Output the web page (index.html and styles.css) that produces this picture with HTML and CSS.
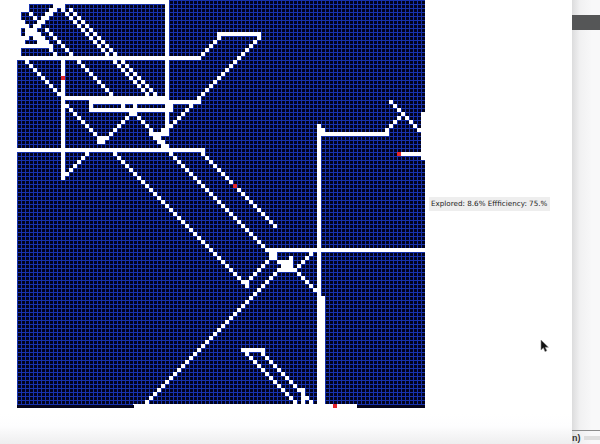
FILE: index.html
```html
<!DOCTYPE html>
<html lang="en">

<head>
    <meta charset="UTF-8">
    <title>Maze explorer</title>
    <link rel="stylesheet" href="styles.css">
</head>

<body>
    <div class="window">
        <main class="stage">
            <canvas id="maze" class="maze" width="408" height="408"></canvas>
            <p class="stats">Explored: 8.6% Effficiency: 75.%</p>
            <svg class="pointer" width="10" height="14" viewBox="0 0 10 14">
                <path d="M1 1v10l2.4-2.2L5 12.6l1.8-.8-1.6-3.6H8.4z" fill="#111" stroke="#888" stroke-width=".6"/>
            </svg>
        </main>
        <aside class="side">
            <div class="side-bar"></div>
            <div class="side-status"><b>n)</b><span class="side-faint"></span></div>
        </aside>
    </div>
    <script src="maze.js"></script>
</body>

</html>
```

FILE: styles.css
```css
html,
body {
    margin: 0;
    padding: 0;
    background: #fff;
}

.window {
    display: flex;
    width: 600px;
    height: 444px;
    overflow: hidden;
}

/* main area */
.stage {
    position: relative;
    width: 572px;
    padding-left: 17px;
    box-sizing: border-box;
    background: linear-gradient(to top, #eeeeef, #fdfdfe 18px, #fff 30px);
}

.maze {
    display: block;
}

.stats {
    position: absolute;
    top: 197px;
    left: 429px;
    width: 121px;
    margin: 0;
    padding-left: 2px;
    box-sizing: border-box;
    height: 14px;
    line-height: 14px;
    background: #eeeeee;
    color: #222;
    font-family: "DejaVu Sans", sans-serif;
    font-size: 7.2px;
    white-space: nowrap;
}

.pointer {
    position: absolute;
    top: 339px;
    left: 540px;
}

/* window behind */
.side {
    display: flex;
    flex-direction: column;
    flex: 1;
    background: linear-gradient(to right, #dcdcdd, #f1f1f2 8px, #f8f8f9 20px);
}

.side-bar {
    height: 15px;
    margin-top: 15px;
    background: #555657;
}

.side-status {
    margin-top: auto;
    height: 13px;
    border-top: 1px solid #8c8c8c;
    display: flex;
    align-items: center;
    gap: 3px;
    color: #333;
    font-family: "Liberation Sans", sans-serif;
    font-size: 9px;
}

.side-faint {
    flex: 1;
    height: 4px;
    background: #dedede;
}
```

FILE: maze.js
```js
const canvas = document.getElementById('maze');
const ctx = canvas.getContext('2d');

const PITCH = 4;
const COLS = 102;

// left column of the canvas sits at x=17 on the page
const colOf = (x) => Math.round((x - 17 - 2) / PITCH);
const rowOf = (y) => Math.round((y - 2) / PITCH);

// blocks of open cells, [c1, r1, c2, r2] inclusive
const blocks = [
    [0, 0, 37, 0], [0, 0, 0, 13], [1, 1, 2, 2],
    [9, 1, 11, 1], [8, 2, 9, 2], [7, 3, 8, 3], [6, 4, 7, 4], [5, 5, 6, 5], [4, 6, 5, 6],
    [3, 3, 3, 3], [4, 4, 4, 4], [1, 5, 1, 6], [2, 6, 2, 6],
    [2, 7, 4, 7], [2, 8, 5, 8], [1, 9, 2, 9], [4, 9, 6, 9], [1, 10, 1, 10], [5, 10, 7, 10],
    [1, 11, 8, 11], [8, 12, 8, 12], [9, 13, 9, 13],
    [11, 24, 37, 24], [18, 25, 45, 25], [18, 26, 18, 26], [26, 26, 26, 26], [29, 26, 29, 26],
    [37, 26, 38, 26], [18, 27, 38, 27],
    [20, 34, 21, 35],
    [66, 65, 68, 67]
];

// wall lines in page pixels
const walls = [
    [19, 58, 198, 58],
    [19, 151, 203, 151],
    [64, 58, 64, 178],
    [168, 0, 168, 135],
    [318, 127, 318, 403],
    [322, 296, 322, 403],
    [322, 131, 322, 131],
    [322, 135, 386, 135],
    [270, 251, 424, 251],
    [220, 34, 258, 34],
    [218, 36, 199, 55],
    [257, 37, 172, 120],
    [166, 124, 154, 136],
    [152, 135, 168, 135],
    [158, 141, 166, 149],
    [63, 10, 110, 57],
    [71, 10, 118, 57],
    [113, 62, 150, 99],
    [121, 62, 158, 99],
    [79, 63, 113, 97],
    [46, 30, 70, 54],
    [27, 63, 60, 97],
    [67, 106, 97, 136],
    [130, 113, 105, 136],
    [135, 113, 165, 146],
    [64, 178, 88, 155],
    [203, 153, 275, 225],
    [172, 153, 268, 250],
    [115, 153, 245, 283],
    [245, 283, 277, 253],
    [292, 258, 148, 402],
    [298, 265, 307, 255],
    [272, 255, 280, 263],
    [292, 267, 317, 291],
    [244, 350, 263, 350],
    [244, 350, 295, 400],
    [263, 352, 312, 400],
    [302, 390, 302, 403],
    [390, 102, 420, 132],
    [400, 118, 385, 133],
    [401, 155, 420, 155],
    [134, 407, 356, 407],
    [422, 113, 422, 157]
];

const marks = [[63, 78], [234, 184], [399, 155], [334, 406]];

const cellsOfWall = ([x1, y1, x2, y2]) => {
    const c1 = colOf(x1);
    const r1 = rowOf(y1);
    let dc = colOf(x2) - c1;
    let dr = rowOf(y2) - r1;
    // nearly 45 degrees: keep it a clean staircase
    if (dc !== 0 && dr !== 0 && Math.abs(Math.abs(dc) - Math.abs(dr)) <= 3) {
        const n = Math.max(Math.abs(dc), Math.abs(dr));
        dc = Math.sign(dc) * n;
        dr = Math.sign(dr) * n;
    }
    const steps = Math.max(Math.abs(dc), Math.abs(dr), 1);
    const cells = [];
    for (let i = 0; i <= steps; i++) {
        cells.push([c1 + Math.round((dc * i) / steps), r1 + Math.round((dr * i) / steps)]);
    }
    return cells;
};

const paintCell = (c, r, color) => {
    ctx.fillStyle = color;
    ctx.fillRect(c * PITCH, r * PITCH, PITCH, PITCH);
};

// background and grid lines
ctx.fillStyle = '#02031c';
ctx.fillRect(0, 0, 408, 408);
ctx.fillStyle = '#1732ad';
for (let i = 0; i <= COLS; i++) {
    ctx.fillRect(i * PITCH, 0, 1, 408);
    ctx.fillRect(0, i * PITCH, 408, 1);
}

blocks.forEach(([c1, r1, c2, r2]) => {
    for (let r = r1; r <= r2; r++) {
        for (let c = c1; c <= c2; c++) {
            paintCell(c, r, '#fff');
        }
    }
});

walls.forEach((wall) => {
    cellsOfWall(wall).forEach(([c, r]) => paintCell(c, r, '#fff'));
});

marks.forEach(([x, y]) => paintCell(colOf(x), rowOf(y), '#e3262b'));

// bottom edge of the board is darker
ctx.fillStyle = '#04041c';
ctx.fillRect(0, 405, 117, 3);
ctx.fillRect(340, 405, 68, 3);
```
